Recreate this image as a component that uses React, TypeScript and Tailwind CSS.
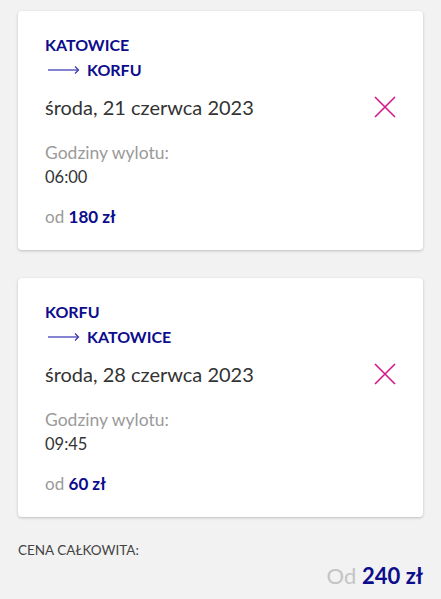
import React from 'react';

type Flight = {
  from: string;
  to: string;
  date: string;
  time: string;
  price: string;
};

const flights: Flight[] = [
  { from: 'KATOWICE', to: 'KORFU', date: 'środa, 21 czerwca 2023', time: '06:00', price: '180 zł' },
  { from: 'KORFU', to: 'KATOWICE', date: 'środa, 28 czerwca 2023', time: '09:45', price: '60 zł' },
];

function Arrow() {
  return (
    <svg width="35" height="10" viewBox="0 0 35 10" className="mr-[7px]">
      <line x1="3" y1="5" x2="33" y2="5" stroke="#6666c8" strokeWidth="1.6" />
      <path d="M30 1.5 L33.5 5 L30 8.5" fill="none" stroke="#3b3bb0" strokeWidth="1.3" />
    </svg>
  );
}

function CloseIcon() {
  return (
    <svg width="22" height="22" viewBox="0 0 22 22">
      <path d="M1 1 L21 21 M21 1 L1 21" stroke="#d4168c" strokeWidth="1.6" />
    </svg>
  );
}

function FlightCard({ f }: { f: Flight }) {
  return (
    <div className="bg-white rounded-[4px] shadow-[0_1px_3px_rgba(0,0,0,0.22)] px-[27px] pt-[21px] pb-[21px]">
      <div className="text-[16px] leading-[25px] font-bold text-[#0c0c8c]">{f.from}</div>
      <div className="flex items-center text-[16px] leading-[25px] font-bold text-[#0c0c8c]">
        <Arrow />
        {f.to}
      </div>
      <div className="flex items-center justify-between mt-[11px]">
        <span className="text-[20px] leading-[28px] text-[#333]">{f.date}</span>
        <CloseIcon />
      </div>
      <div className="mt-[19px] text-[17.5px] leading-[25px] text-[#9a9a9a]">Godziny wylotu:</div>
      <div className="text-[16.5px] leading-[25px] text-[#333]">{f.time}</div>
      <div className="mt-[14px] text-[17px] leading-[25px] text-[#9a9a9a]">
        od <span className="font-bold text-[#0c0c8c]">{f.price}</span>
      </div>
    </div>
  );
}

export default function App() {
  return (
    <div className="min-h-[599px] w-[441px] bg-[#f2f2f2] px-[18px] pt-[11px] pb-4 font-['Lato',sans-serif]">
      <div className="flex flex-col gap-[28px]">
        {flights.map((f) => (
          <FlightCard key={f.from} f={f} />
        ))}
      </div>
      <div className="mt-[23px] text-[13.5px] leading-[20px] text-[#444] uppercase">Cena całkowita:</div>
      <div className="mt-[2px] text-right text-[22px] leading-[28px]">
        <span className="text-[#c4c4c4]">Od</span>{' '}
        <span className="font-bold text-[#0c0c8c]">240 zł</span>
      </div>
    </div>
  );
}
